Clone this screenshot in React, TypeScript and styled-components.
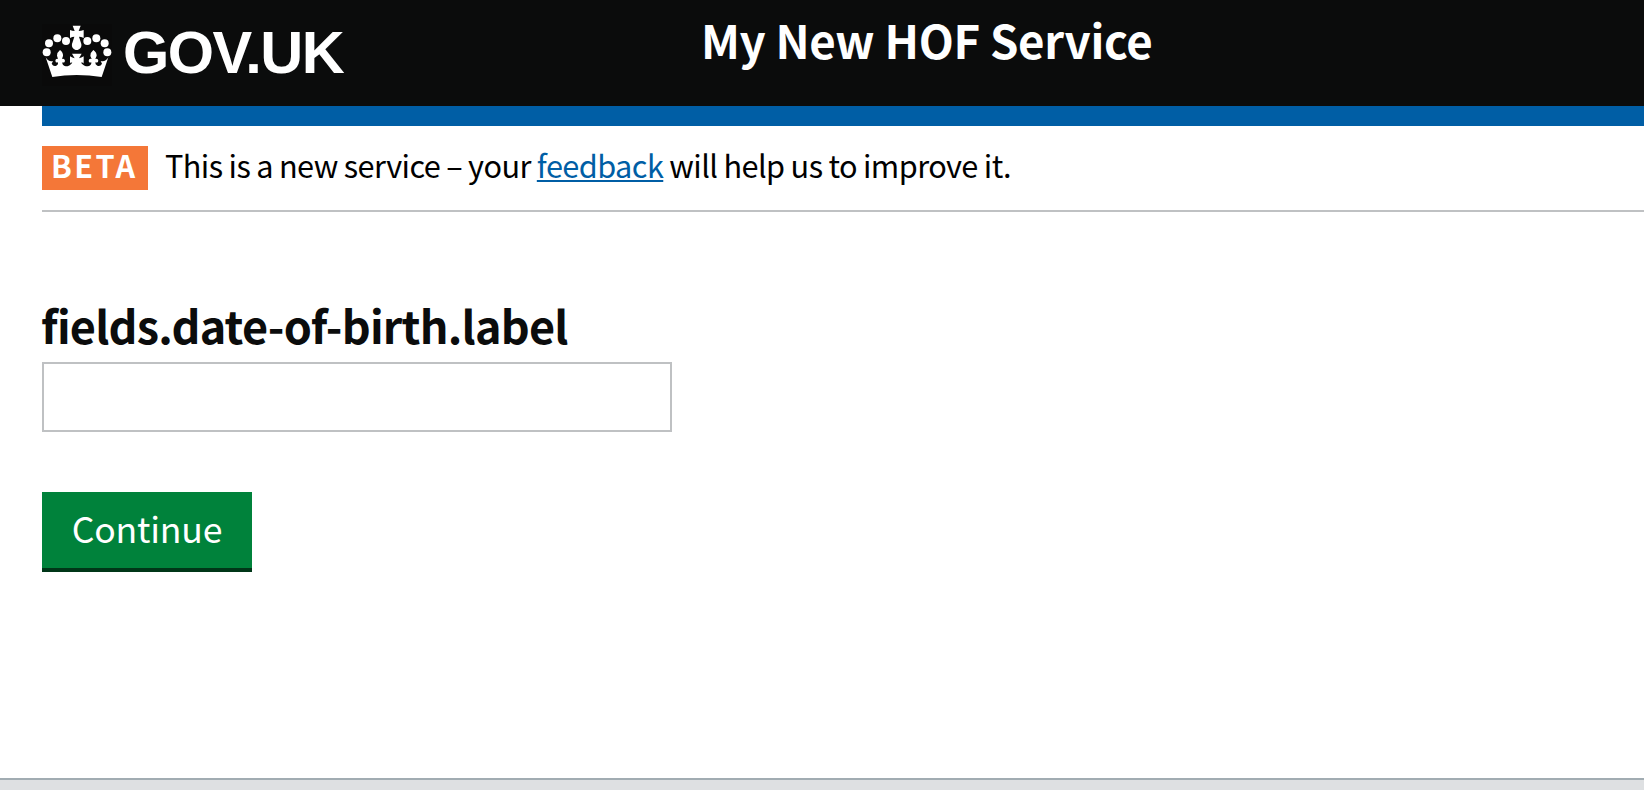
import React from 'react';
import styled, { createGlobalStyle } from 'styled-components';

const transport = '"Noto Sans CJK SC", "Noto Sans", sans-serif';

const GlobalStyle = createGlobalStyle`
  body {
    margin: 0;
    background: #fff;
    color: #0b0c0c;
    font-family: ${transport};
  }
  *, *::before, *::after { box-sizing: border-box; }
`;

const Page = styled.div`
  display: flex;
  flex-direction: column;
  height: 790px;
  overflow: hidden;
`;

const Header = styled.header`
  display: grid;
  grid-template-columns: 659px 1fr;
  height: 106px;
  padding-left: 42px;
  background: #0b0c0c;
  color: #fff;
`;

const LogoLink = styled.a`
  display: flex;
  align-items: flex-start;
  gap: 11px;
  padding-top: 24px;
  color: #fff;
`;

const Wordmark = styled.span`
  font: bold 59.5px/58px "Liberation Sans", Arial, sans-serif;
  letter-spacing: -1.5px;
`;

const ServiceName = styled.span`
  margin-top: 11px;
  font-size: 45.6px;
  font-weight: 700;
  line-height: 56px;
  letter-spacing: -0.3px;
  white-space: nowrap;
`;

const Main = styled.main`
  flex: 1;
  padding-left: 42px;
`;

const BlueBar = styled.div`
  height: 20px;
  background: #005ea5;
`;

const PhaseBanner = styled.div`
  display: flex;
  align-items: flex-start;
  gap: 17px;
  height: 86px;
  padding-top: 20px;
  border-bottom: 2px solid #bfc1c3;
`;

const PhaseTag = styled.strong`
  width: 106px;
  height: 44px;
  padding-left: 9px;
  background: #f47738;
  color: #fff;
  font-size: 30.6px;
  font-weight: 700;
  line-height: 38px;
  letter-spacing: 2.4px;
`;

const PhaseText = styled.span`
  color: #000;
  font-size: 30.7px;
  line-height: 38px;
  letter-spacing: -0.57px;
  word-spacing: -0.3px;
  white-space: nowrap;
`;

const FeedbackLink = styled.a`
  color: #005ea5;
  text-decoration: underline;
  text-decoration-thickness: 2px;
  text-underline-offset: 2px;
  text-decoration-skip-ink: none;
`;

const Form = styled.form`
  display: flex;
  flex-direction: column;
  align-items: flex-start;
  padding-top: 85px;
`;

const Label = styled.label`
  margin: 0 0 9px -1px;
  font-size: 45px;
  font-weight: 700;
  line-height: 56px;
  letter-spacing: -0.8px;
`;

const TextInput = styled.input`
  width: 630px;
  height: 70px;
  margin: 0 0 60px;
  padding: 8px;
  border: 2px solid #bfc1c3;
  border-radius: 0;
  background: #fff;
  font: 36px ${transport};
`;

const Button = styled.button`
  width: 210px;
  height: 80px;
  padding: 0 0 8px;
  border: 0;
  background: #00823b;
  box-shadow: inset 0 -4px 0 #003618;
  color: #fff;
  font: 400 35.6px/72px ${transport};
  letter-spacing: -0.2px;
`;

const Footer = styled.footer`
  height: 12px;
  border-top: 2px solid #a1acb2;
  background: #dee0e2;
`;

const jewels = [
  [50, 112], [57, 85], [82, 70], [108, 78],
  [172, 78], [199, 70], [224, 85], [232, 112],
];

const Crown = () => (
  <svg width="70" height="62" viewBox="36 27 210 186" fill="#fff" aria-hidden="true">
    <rect x="36" y="27" width="210" height="186" fill="#0a0a0a" />
    {jewels.map(([cx, cy]) => <circle key={cx} cx={cx} cy={cy} r="12" />)}
    <path d="M128 32H152L146 48Q153 48 161 45V69Q153 65 147 65L154 87C156 98 148 105 140 105S124 98 126 87L133 65Q127 65 120 69V45Q127 48 134 48Z" />
    <path d="M47 127Q56 142 69 138L65 146Q70 156 79 152Q86 149 84 142Q77 145 76 137Q77 130 84 132L81 122Q81 112 90 105Q100 113 99 123L96 132Q103 129 105 137Q104 145 97 142Q96 151 107 154Q119 154 127 143Q120 142 120 146V124Q127 129 134 130L126 116H155L147 130Q154 129 161 124V146Q160 142 153 143Q161 154 174 154Q185 151 184 142Q176 145 176 137Q177 129 185 132L181 123Q181 112 190 105Q200 112 200 122L196 132Q204 130 205 137Q204 145 196 142Q195 149 202 152Q211 156 216 146L212 138Q226 142 235 127L215 186Q177 180 140 180T67 186Z" />
  </svg>
);

export default function App() {
  return (
    <Page>
      <GlobalStyle />
      <Header>
        <LogoLink>
          <Crown />
          <Wordmark>GOV.UK</Wordmark>
        </LogoLink>
        <ServiceName>My New HOF Service</ServiceName>
      </Header>
      <Main>
        <BlueBar />
        <PhaseBanner>
          <PhaseTag>BETA</PhaseTag>
          <PhaseText>
            This is a new service – your <FeedbackLink>feedback</FeedbackLink> will help us to improve it.
          </PhaseText>
        </PhaseBanner>
        <Form>
          <Label htmlFor="date-of-birth">fields.date-of-birth.label</Label>
          <TextInput id="date-of-birth" type="text" />
          <Button type="button">Continue</Button>
        </Form>
      </Main>
      <Footer />
    </Page>
  );
}
